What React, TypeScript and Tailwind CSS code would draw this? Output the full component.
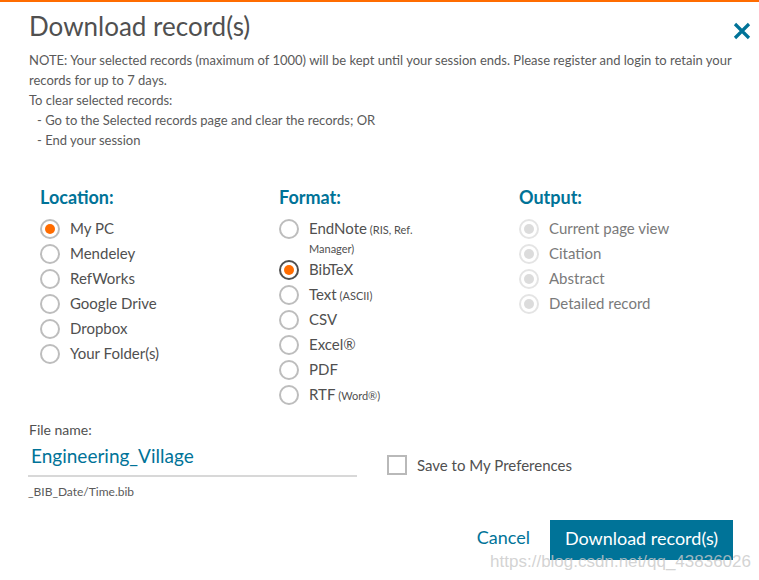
import React from "react";

const font = { fontFamily: "Lato, 'Open Sans', sans-serif" };

function Radio({ state }: { state: "off" | "on" | "focus" | "disabled" }) {
  const ring =
    state === "focus"
      ? "border-[#505050]"
      : state === "disabled"
      ? "border-[#e4e4e4]"
      : "border-[#bdbdbd]";
  return (
    <span
      className={`w-[20px] h-[20px] rounded-full border-2 ${ring} flex items-center justify-center shrink-0 bg-white`}
    >
      {(state === "on" || state === "focus") && (
        <span className="w-[10px] h-[10px] rounded-full bg-[#ff6c00]" />
      )}
      {state === "disabled" && (
        <span className="w-[10px] h-[10px] rounded-full bg-[#dcdcdc]" />
      )}
    </span>
  );
}

function Row({
  state,
  label,
  small,
  muted,
}: {
  state: "off" | "on" | "focus" | "disabled";
  label: string;
  small?: string;
  muted?: boolean;
}) {
  return (
    <div className="flex items-center h-[25px] gap-[10px]">
      <Radio state={state} />
      <span
        className={`text-[15px] ${muted ? "text-[#7a7a7a]" : "text-[#505050]"}`}
      >
        {label}
        {small && <span className="text-[11px]"> {small}</span>}
      </span>
    </div>
  );
}

export default function App() {
  return (
    <div
      className="relative w-[759px] h-[580px] bg-white border-t-2 border-[#ff6c00] overflow-hidden"
      style={font}
    >
      <div className="flex items-start justify-between pl-[29px] pr-[8px] pt-[6px]">
        <h1 className="text-[26px] leading-[36px] text-[#505050]">
          Download record(s)
        </h1>
        <svg width="18" height="18" viewBox="0 0 18 18" className="mt-[14px]">
          <path
            d="M2 2 L16 16 M16 2 L2 16"
            stroke="#007398"
            strokeWidth="3.2"
            strokeLinecap="butt"
          />
        </svg>
      </div>

      <div className="pl-[29px] pr-[16px] mt-[6px] text-[13px] leading-[20px] text-[#5a5a5a]">
        <p>
          NOTE: Your selected records (maximum of 1000) will be kept until your
          session ends. Please register and login to retain your records for up
          to 7 days.
        </p>
        <p>To clear selected records:</p>
        <p className="pl-[8px]">- Go to the Selected records page and clear the records; OR</p>
        <p className="pl-[8px]">- End your session</p>
      </div>

      <div className="grid grid-cols-[239px_240px_240px] pl-[40px] mt-[35px]">
        <div>
          <h2 className="text-[18px] leading-[24px] font-bold text-[#007398]">
            Location:
          </h2>
          <div className="mt-[7px] flex flex-col">
            <Row state="on" label="My PC" />
            <Row state="off" label="Mendeley" />
            <Row state="off" label="RefWorks" />
            <Row state="off" label="Google Drive" />
            <Row state="off" label="Dropbox" />
            <Row state="off" label="Your Folder(s)" />
          </div>
        </div>
        <div>
          <h2 className="text-[18px] leading-[24px] font-bold text-[#007398]">
            Format:
          </h2>
          <div className="mt-[7px] flex flex-col">
            <div>
              <Row state="off" label="EndNote" small="(RIS, Ref." />
              <div className="pl-[30px] text-[11px] leading-[16px] text-[#505050]">
                Manager)
              </div>
            </div>
            <Row state="focus" label="BibTeX" />
            <Row state="off" label="Text" small="(ASCII)" />
            <Row state="off" label="CSV" />
            <Row state="off" label="Excel®" />
            <Row state="off" label="PDF" />
            <Row state="off" label="RTF" small="(Word®)" />
          </div>
        </div>
        <div>
          <h2 className="text-[18px] leading-[24px] font-bold text-[#007398]">
            Output:
          </h2>
          <div className="mt-[7px] flex flex-col">
            <Row state="disabled" label="Current page view" muted />
            <Row state="disabled" label="Citation" muted />
            <Row state="disabled" label="Abstract" muted />
            <Row state="disabled" label="Detailed record" muted />
          </div>
        </div>
      </div>

      <div className="flex items-start pl-[28px] mt-[13px]">
        <div className="w-[329px]">
          <div className="text-[14px] leading-[20px] text-[#505050] pl-[1px]">
            File name:
          </div>
          <div className="mt-[2px] border-b-2 border-[#d8d8d8] pb-[5px] pl-[3px] text-[19px] leading-[28px] text-[#007398]">
            Engineering_Village
          </div>
          <div className="mt-[7px] text-[12px] leading-[16px] text-[#5a5a5a]">
            _BIB_Date/Time.bib
          </div>
        </div>
        <div className="flex items-center gap-[10px] ml-[30px] mt-[34px]">
          <span className="w-[20px] h-[20px] border-2 border-[#b9b9b9] bg-white" />
          <span className="text-[15px] text-[#505050]">
            Save to My Preferences
          </span>
        </div>
      </div>

      <div className="flex items-center justify-end gap-[20px] pr-[26px] mt-[20px]">
        <span className="text-[18px] text-[#007398] mb-[5px]">Cancel</span>
        <button className="h-[40px] w-[183px] bg-[#007398] text-white text-[18px] pb-[4px]">
          Download record(s)
        </button>
      </div>

      <div
        className="absolute right-[8px] bottom-[6px] text-[17px] text-[#c8c8c8]/80"
        style={{ fontFamily: "'Liberation Sans', Arial, sans-serif" }}
      >
        https://blog.csdn.net/qq_43836026
      </div>
    </div>
  );
}
